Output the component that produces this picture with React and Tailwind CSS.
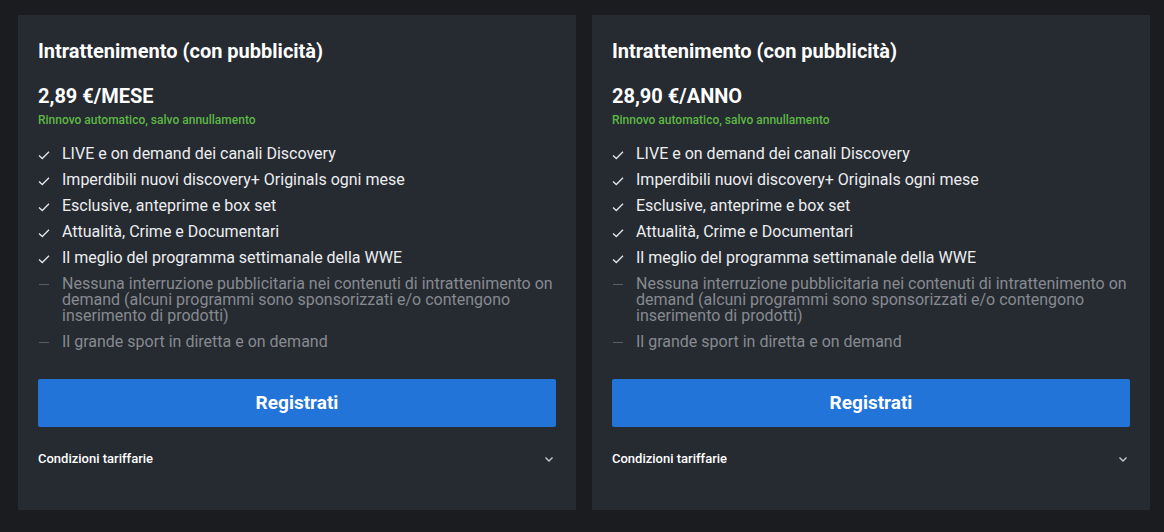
import React from 'react';

const features = [
  { ok: true, text: 'LIVE e on demand dei canali Discovery' },
  { ok: true, text: 'Imperdibili nuovi discovery+ Originals ogni mese' },
  { ok: true, text: 'Esclusive, anteprime e box set' },
  { ok: true, text: 'Attualità, Crime e Documentari' },
  { ok: true, text: 'Il meglio del programma settimanale della WWE' },
  {
    ok: false,
    text: 'Nessuna interruzione pubblicitaria nei contenuti di intrattenimento on demand (alcuni programmi sono sponsorizzati e/o contengono inserimento di prodotti)',
  },
  { ok: false, text: 'Il grande sport in diretta e on demand' },
];

const Check = () => (
  <svg width="12" height="12" viewBox="0 0 12 12" fill="none" className="mt-[3px]">
    <path d="M1 6.5 L4.3 9.5 L11 2.8" stroke="#e6e7e9" strokeWidth="1.3" />
  </svg>
);

const Dash = () => (
  <div className="w-[10px] h-px bg-[#5a5e65] mt-[8px] ml-[1px]" />
);

// card del piano
const PlanCard = ({ price }) => (
  <div className="flex-1 bg-[#262a31] px-5 pt-[24px] pb-[44px] flex flex-col">
    <h2 className="text-[20px] leading-[24px] font-bold text-white">Intrattenimento (con pubblicità)</h2>
    <div className="mt-[21px] text-[20px] leading-[24px] font-bold text-white">{price}</div>
    <div className="mt-[5px] text-[12px] leading-[14px] font-medium text-[#5db846]">
      Rinnovo automatico, salvo annullamento
    </div>
    <ul className="mt-[14px] flex flex-col">
      {features.map((f, i) => (
        <li key={i} className="flex gap-3 py-[5px]">
          <div className="w-3 shrink-0">{f.ok ? <Check /> : <Dash />}</div>
          <span
            className={`text-[16px] leading-[16px] ${
              f.ok ? 'text-[#eceef0]' : 'text-[#878a90]'
            }`}
          >
            {f.text}
          </span>
        </li>
      ))}
    </ul>
    <button className="mt-[24px] h-12 w-full rounded-[2px] bg-[#2274d8] text-white text-[19px] font-bold">
      Registrati
    </button>
    <div className="mt-[24px] flex items-center justify-between">
      <span className="text-[13px] leading-[15px] font-medium text-white">Condizioni tariffarie</span>
      <svg width="10" height="8" viewBox="0 0 10 8" fill="none" className="mr-[2px]">
        <path d="M1.5 2.5 L5 6 L8.5 2.5" stroke="#c8cacd" strokeWidth="1.4" />
      </svg>
    </div>
  </div>
);

export default function App() {
  return (
    <div
      className="w-[1164px] h-[532px] bg-[#1b1c20] pl-[18px] pr-[14px] pt-[15px] flex gap-4 items-start"
      style={{ fontFamily: 'Roboto, "Liberation Sans", sans-serif' }}
    >
      <PlanCard price="2,89 €/MESE" />
      <PlanCard price="28,90 €/ANNO" />
    </div>
  );
}
